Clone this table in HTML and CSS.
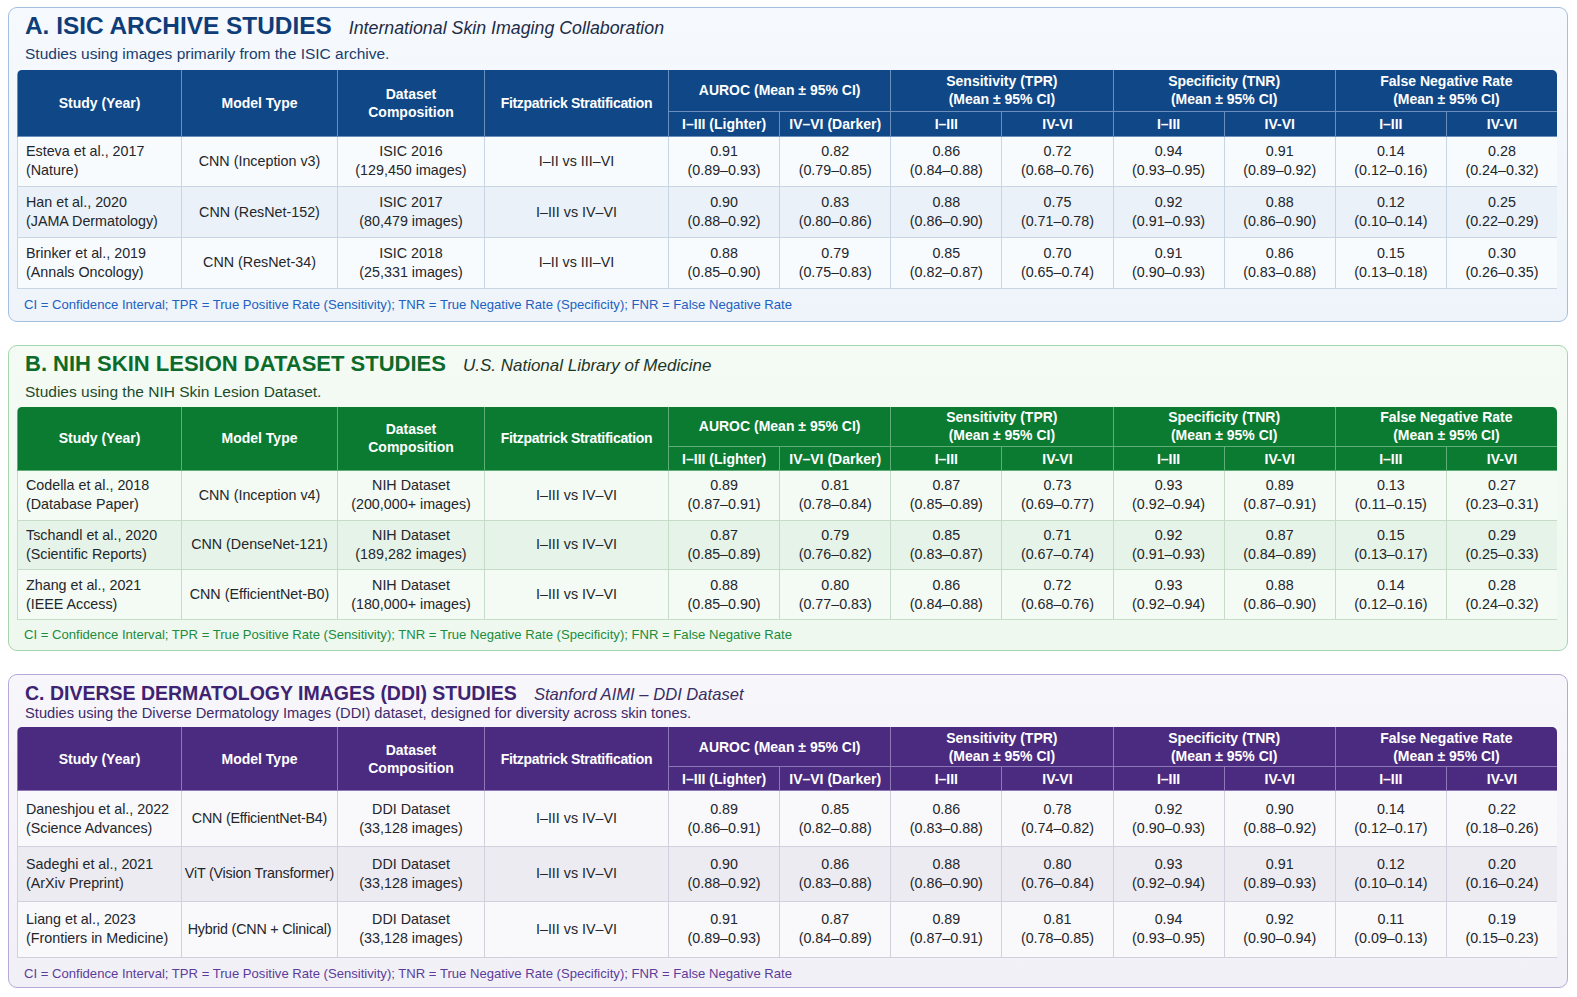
FILE: index.html
```html
<!DOCTYPE html>
<html lang="en">
<head>
<meta charset="utf-8">
<title>Skin Imaging Studies</title>
<link rel="stylesheet" href="styles.css">
</head>
<body>
<main class="page">

<section class="panel panel-a">
  <div class="head"><h2 class="title">A. ISIC ARCHIVE STUDIES</h2><span class="source">International Skin Imaging Collaboration</span></div>
  <p class="desc">Studies using images primarily from the ISIC archive.</p>
  <div class="tablewrap">
  <table class="data">
    <colgroup><col class="c1"><col class="c2"><col class="c3"><col class="c4"><col class="m"><col class="m"><col class="m"><col class="m"><col class="m"><col class="m"><col class="m"><col class="m"></colgroup>
    <thead>
      <tr class="h1"><th rowspan="2">Study (Year)</th><th rowspan="2">Model Type</th><th rowspan="2">Dataset<br>Composition</th><th rowspan="2" class="fitz">Fitzpatrick Stratification</th><th colspan="2">AUROC (Mean ± 95% CI)</th><th colspan="2">Sensitivity (TPR)<br>(Mean ± 95% CI)</th><th colspan="2">Specificity (TNR)<br>(Mean ± 95% CI)</th><th colspan="2">False Negative Rate<br>(Mean ± 95% CI)</th></tr>
      <tr class="h2"><th>I–III (Lighter)</th><th>IV–VI (Darker)</th><th>I–III</th><th>IV-VI</th><th>I–III</th><th>IV-VI</th><th>I–III</th><th>IV-VI</th></tr>
    </thead>
    <tbody>
      <tr><td class="study">Esteva et al., 2017<br>(Nature)</td><td>CNN (Inception v3)</td><td>ISIC 2016<br>(129,450 images)</td><td>I–II vs III–VI</td><td>0.91<br>(0.89–0.93)</td><td>0.82<br>(0.79–0.85)</td><td>0.86<br>(0.84–0.88)</td><td>0.72<br>(0.68–0.76)</td><td>0.94<br>(0.93–0.95)</td><td>0.91<br>(0.89–0.92)</td><td>0.14<br>(0.12–0.16)</td><td>0.28<br>(0.24–0.32)</td></tr>
      <tr><td class="study">Han et al., 2020<br>(JAMA Dermatology)</td><td>CNN (ResNet-152)</td><td>ISIC 2017<br>(80,479 images)</td><td>I–III vs IV–VI</td><td>0.90<br>(0.88–0.92)</td><td>0.83<br>(0.80–0.86)</td><td>0.88<br>(0.86–0.90)</td><td>0.75<br>(0.71–0.78)</td><td>0.92<br>(0.91–0.93)</td><td>0.88<br>(0.86–0.90)</td><td>0.12<br>(0.10–0.14)</td><td>0.25<br>(0.22–0.29)</td></tr>
      <tr><td class="study">Brinker et al., 2019<br>(Annals Oncology)</td><td>CNN (ResNet-34)</td><td>ISIC 2018<br>(25,331 images)</td><td>I–II vs III–VI</td><td>0.88<br>(0.85–0.90)</td><td>0.79<br>(0.75–0.83)</td><td>0.85<br>(0.82–0.87)</td><td>0.70<br>(0.65–0.74)</td><td>0.91<br>(0.90–0.93)</td><td>0.86<br>(0.83–0.88)</td><td>0.15<br>(0.13–0.18)</td><td>0.30<br>(0.26–0.35)</td></tr>
    </tbody>
  </table>
  </div>
  <p class="foot">CI = Confidence Interval; TPR = True Positive Rate (Sensitivity); TNR = True Negative Rate (Specificity); FNR = False Negative Rate</p>
</section>

<section class="panel panel-b">
  <div class="head"><h2 class="title">B. NIH SKIN LESION DATASET STUDIES</h2><span class="source">U.S. National Library of Medicine</span></div>
  <p class="desc">Studies using the NIH Skin Lesion Dataset.</p>
  <div class="tablewrap">
  <table class="data">
    <colgroup><col class="c1"><col class="c2"><col class="c3"><col class="c4"><col class="m"><col class="m"><col class="m"><col class="m"><col class="m"><col class="m"><col class="m"><col class="m"></colgroup>
    <thead>
      <tr class="h1"><th rowspan="2">Study (Year)</th><th rowspan="2">Model Type</th><th rowspan="2">Dataset<br>Composition</th><th rowspan="2" class="fitz">Fitzpatrick Stratification</th><th colspan="2">AUROC (Mean ± 95% CI)</th><th colspan="2">Sensitivity (TPR)<br>(Mean ± 95% CI)</th><th colspan="2">Specificity (TNR)<br>(Mean ± 95% CI)</th><th colspan="2">False Negative Rate<br>(Mean ± 95% CI)</th></tr>
      <tr class="h2"><th>I–III (Lighter)</th><th>IV–VI (Darker)</th><th>I–III</th><th>IV-VI</th><th>I–III</th><th>IV-VI</th><th>I–III</th><th>IV-VI</th></tr>
    </thead>
    <tbody>
      <tr><td class="study">Codella et al., 2018<br>(Database Paper)</td><td>CNN (Inception v4)</td><td>NIH Dataset<br>(200,000+ images)</td><td>I–III vs IV–VI</td><td>0.89<br>(0.87–0.91)</td><td>0.81<br>(0.78–0.84)</td><td>0.87<br>(0.85–0.89)</td><td>0.73<br>(0.69–0.77)</td><td>0.93<br>(0.92–0.94)</td><td>0.89<br>(0.87–0.91)</td><td>0.13<br>(0.11–0.15)</td><td>0.27<br>(0.23–0.31)</td></tr>
      <tr><td class="study">Tschandl et al., 2020<br>(Scientific Reports)</td><td>CNN (DenseNet-121)</td><td>NIH Dataset<br>(189,282 images)</td><td>I–III vs IV–VI</td><td>0.87<br>(0.85–0.89)</td><td>0.79<br>(0.76–0.82)</td><td>0.85<br>(0.83–0.87)</td><td>0.71<br>(0.67–0.74)</td><td>0.92<br>(0.91–0.93)</td><td>0.87<br>(0.84–0.89)</td><td>0.15<br>(0.13–0.17)</td><td>0.29<br>(0.25–0.33)</td></tr>
      <tr><td class="study">Zhang et al., 2021<br>(IEEE Access)</td><td>CNN (EfficientNet-B0)</td><td>NIH Dataset<br>(180,000+ images)</td><td>I–III vs IV–VI</td><td>0.88<br>(0.85–0.90)</td><td>0.80<br>(0.77–0.83)</td><td>0.86<br>(0.84–0.88)</td><td>0.72<br>(0.68–0.76)</td><td>0.93<br>(0.92–0.94)</td><td>0.88<br>(0.86–0.90)</td><td>0.14<br>(0.12–0.16)</td><td>0.28<br>(0.24–0.32)</td></tr>
    </tbody>
  </table>
  </div>
  <p class="foot">CI = Confidence Interval; TPR = True Positive Rate (Sensitivity); TNR = True Negative Rate (Specificity); FNR = False Negative Rate</p>
</section>

<section class="panel panel-c">
  <div class="head"><h2 class="title">C. DIVERSE DERMATOLOGY IMAGES (DDI) STUDIES</h2><span class="source">Stanford AIMI – DDI Dataset</span></div>
  <p class="desc">Studies using the Diverse Dermatology Images (DDI) dataset, designed for diversity across skin tones.</p>
  <div class="tablewrap">
  <table class="data">
    <colgroup><col class="c1"><col class="c2"><col class="c3"><col class="c4"><col class="m"><col class="m"><col class="m"><col class="m"><col class="m"><col class="m"><col class="m"><col class="m"></colgroup>
    <thead>
      <tr class="h1"><th rowspan="2">Study (Year)</th><th rowspan="2">Model Type</th><th rowspan="2">Dataset<br>Composition</th><th rowspan="2" class="fitz">Fitzpatrick Stratification</th><th colspan="2">AUROC (Mean ± 95% CI)</th><th colspan="2">Sensitivity (TPR)<br>(Mean ± 95% CI)</th><th colspan="2">Specificity (TNR)<br>(Mean ± 95% CI)</th><th colspan="2">False Negative Rate<br>(Mean ± 95% CI)</th></tr>
      <tr class="h2"><th>I–III (Lighter)</th><th>IV–VI (Darker)</th><th>I–III</th><th>IV-VI</th><th>I–III</th><th>IV-VI</th><th>I–III</th><th>IV-VI</th></tr>
    </thead>
    <tbody>
      <tr><td class="study">Daneshjou et al., 2022<br>(Science Advances)</td><td class="tight">CNN (EfficientNet-B4)</td><td>DDI Dataset<br>(33,128 images)</td><td>I–III vs IV–VI</td><td>0.89<br>(0.86–0.91)</td><td>0.85<br>(0.82–0.88)</td><td>0.86<br>(0.83–0.88)</td><td>0.78<br>(0.74–0.82)</td><td>0.92<br>(0.90–0.93)</td><td>0.90<br>(0.88–0.92)</td><td>0.14<br>(0.12–0.17)</td><td>0.22<br>(0.18–0.26)</td></tr>
      <tr><td class="study">Sadeghi et al., 2021<br>(ArXiv Preprint)</td><td class="tight">ViT (Vision Transformer)</td><td>DDI Dataset<br>(33,128 images)</td><td>I–III vs IV–VI</td><td>0.90<br>(0.88–0.92)</td><td>0.86<br>(0.83–0.88)</td><td>0.88<br>(0.86–0.90)</td><td>0.80<br>(0.76–0.84)</td><td>0.93<br>(0.92–0.94)</td><td>0.91<br>(0.89–0.93)</td><td>0.12<br>(0.10–0.14)</td><td>0.20<br>(0.16–0.24)</td></tr>
      <tr><td class="study">Liang et al., 2023<br>(Frontiers in Medicine)</td><td class="tight">Hybrid (CNN + Clinical)</td><td>DDI Dataset<br>(33,128 images)</td><td>I–III vs IV–VI</td><td>0.91<br>(0.89–0.93)</td><td>0.87<br>(0.84–0.89)</td><td>0.89<br>(0.87–0.91)</td><td>0.81<br>(0.78–0.85)</td><td>0.94<br>(0.93–0.95)</td><td>0.92<br>(0.90–0.94)</td><td>0.11<br>(0.09–0.13)</td><td>0.19<br>(0.15–0.23)</td></tr>
    </tbody>
  </table>
  </div>
  <p class="foot">CI = Confidence Interval; TPR = True Positive Rate (Sensitivity); TNR = True Negative Rate (Specificity); FNR = False Negative Rate</p>
</section>

</main>
</body>
</html>
```

FILE: styles.css
```css
* { box-sizing: border-box; }

html, body {
  margin: 0;
  padding: 0;
  background: #ffffff;
  width: 1577px;
  height: 997px;
  overflow: hidden;
}

body {
  font-family: "Liberation Sans", Arial, sans-serif;
  color: #1f2328;
}

.page {
  display: flex;
  flex-direction: column;
  gap: 23px;
  padding: 7px 0 0 8px;
}

.panel {
  width: 1560px;
  border: 1px solid #a3c0e0;
  border-radius: 9px;
  padding: 4px 10px 8px 8px;
  background: linear-gradient(180deg, #f6f9fd 0%, #eef4fa 100%);
}

.head {
  display: flex;
  align-items: baseline;
  gap: 17px;
  padding-left: 8px;
  height: 28px;
}

.title {
  margin: 0;
  font-size: 24.4px;
  line-height: 28px;
  font-weight: 700;
  color: #0e3d78;
  white-space: nowrap;
}

.source {
  font-size: 17.8px;
  font-style: italic;
  color: #1d2c47;
  white-space: nowrap;
}

.desc {
  margin: 5px 0 7px 8px;
  font-size: 15.5px;
  line-height: 18px;
  color: #183d6d;
}

.tablewrap {
  border-radius: 5px 5px 0 0;
  overflow: hidden;
  width: 1540px;
}

.data {
  width: 1540px;
  table-layout: fixed;
  border-collapse: collapse;
  font-size: 14.3px;
}

.c1 { width: 164px; }
.c2 { width: 156px; }
.c3 { width: 147px; }
.c4 { width: 184px; }
.m { width: 111.125px; }

.data th {
  background: #0f4787;
  color: #ffffff;
  font-weight: 700;
  font-size: 14px;
  line-height: 18px;
  text-align: center;
  padding: 0 2px;
  border: 1px solid #6b8fbc;
  border-top: 0;
  white-space: nowrap;
}

.data th.fitz { letter-spacing: -0.3px; }

.data tr.h1 th { height: 41px; }
.data tr.h2 th { height: 25px; }

.data td {
  height: 50.7px;
  padding: 0 4px;
  text-align: center;
  line-height: 19px;
  color: #23262b;
  border: 1px solid #c9d5e3;
  background: #f8fbfe;
  white-space: nowrap;
}

.data td.tight {
  padding: 0 1px;
  letter-spacing: -0.2px;
}

.data td.study {
  text-align: left;
  padding-left: 8px;
}

.data tbody tr:nth-child(2) td { background: #eaf1f8; }

.foot {
  margin: 8px 0 0 7px;
  font-size: 13.1px;
  line-height: 16px;
  color: #2161c0;
}

/* ---- Panel B (green) ---- */
.panel-b {
  border-color: #a7d5ad;
  background: linear-gradient(180deg, #f4fbf4 0%, #eef8ef 100%);
  padding-bottom: 7px;
}
.panel-b .title { font-size: 22px; color: #0c6b2a; }
.panel-b .source { font-size: 17px; color: #1f3527; }
.panel-b .desc { color: #1d4a2b; margin-bottom: 6px; }
.panel-b .data th { background: #0b7b32; border-color: #5fae78; }
.panel-b .data tr.h1 th { height: 40px; }
.panel-b .data tr.h2 th { height: 24px; }
.panel-b .data td { height: 49.6px; border-color: #c6dcc9; background: #f4faf4; }
.panel-b .data tbody tr:nth-child(2) td { background: #e6f3e8; }
.panel-b .foot { color: #1b8c3c; margin-top: 7px; }

/* ---- Panel C (purple) ---- */
.panel-c {
  border-color: #b7a9d7;
  background: linear-gradient(180deg, #f7f6fb 0%, #f2f0f7 100%);
  padding-top: 6px;
  padding-bottom: 5px;
}
.panel-c .head { height: 24px; }
.panel-c .title { font-size: 19.5px; line-height: 24px; color: #3e2373; }
.panel-c .source { font-size: 16.6px; color: #3a2d63; }
.panel-c .desc { font-size: 14.7px; line-height: 17px; color: #3d2a6a; margin-top: 0; margin-bottom: 5px; }
.panel-c .data th { background: #4b2b7f; border-color: #8d77b5; }
.panel-c .data tr.h1 th { height: 40px; }
.panel-c .data tr.h2 th { height: 24px; }
.panel-c .data td { height: 55.4px; border-color: #d3cfdd; background: #f9f8fb; }
.panel-c .data tbody tr:nth-child(2) td { background: #edebf2; }
.panel-c .foot { color: #5b3c9a; margin-top: 8px; }
```
